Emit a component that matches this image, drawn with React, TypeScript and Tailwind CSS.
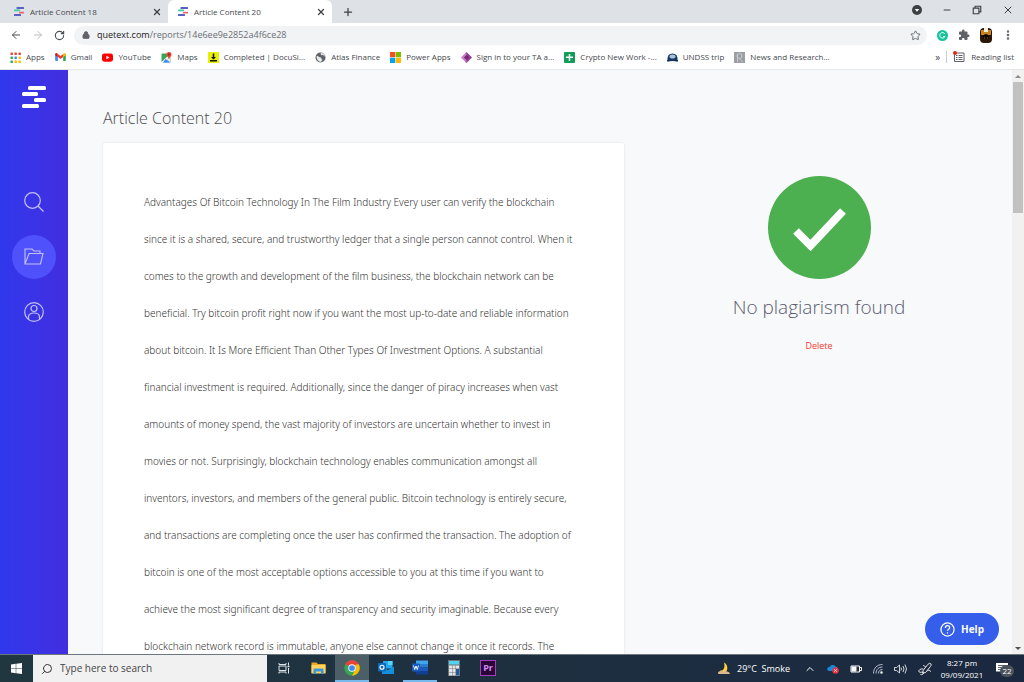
import { useState, type ReactNode } from "react";
import { clsx } from "clsx";
import { ArrowLeft, ArrowRight, RotateCw, Lock, Star, Plus, X, Minus, EllipsisVertical, Search, ChevronUp } from "lucide-react";
import { MdExtension } from "react-icons/md";

const TABS = [
  { id: 18, title: "Article Content 18" },
  { id: 20, title: "Article Content 20" },
];

const ARTICLE = [
  "Advantages Of Bitcoin Technology In The Film Industry Every user can verify the blockchain",
  "since it is a shared, secure, and trustworthy ledger that a single person cannot control. When it",
  "comes to the growth and development of the film business, the blockchain network can be",
  "beneficial. Try bitcoin profit right now if you want the most up-to-date and reliable information",
  "about bitcoin. It Is More Efficient Than Other Types Of Investment Options. A substantial",
  "financial investment is required. Additionally, since the danger of piracy increases when vast",
  "amounts of money spend, the vast majority of investors are uncertain whether to invest in",
  "movies or not. Surprisingly, blockchain technology enables communication amongst all",
  "inventors, investors, and members of the general public. Bitcoin technology is entirely secure,",
  "and transactions are completing once the user has confirmed the transaction. The adoption of",
  "bitcoin is one of the most acceptable options accessible to you at this time if you want to",
  "achieve the most significant degree of transparency and security imaginable. Because every",
  "blockchain network record is immutable, anyone else cannot change it once it records. The",
];

const Favicon = () => (
  <svg viewBox="0 0 20 18" className="h-[9px] w-[10px] shrink-0">
    <rect x="5" y="0" width="15" height="4" rx="1" fill="#5a5fc4" />
    <rect x="0" y="5" width="12" height="3.5" rx="1" fill="#3ecfa0" />
    <rect x="10" y="9.5" width="10" height="3.5" rx="1" fill="#f4606c" />
    <rect x="0" y="14" width="14" height="4" rx="1" fill="#5a5fc4" />
  </svg>
);

const AppsIcon = () => (
  <svg viewBox="0 0 11 11" className="size-[11px]">
    {["#ea4335", "#ea4335", "#ea4335", "#34a853", "#4285f4", "#fbbc05", "#34a853", "#fbbc05", "#fbbc05"].map((c, i) => (
      <rect key={i} x={0.5 + (i % 3) * 4} y={0.5 + Math.floor(i / 3) * 4} width="2.4" height="2.4" rx="0.5" fill={c} />
    ))}
  </svg>
);

const GmailIcon = () => (
  <svg viewBox="0 0 24 18" className="h-[8px] w-[11px]">
    <path d="M0 2v14q0 2 2 2h4V8z" fill="#4285f4" />
    <path d="M24 2v14q0 2-2 2h-4V8z" fill="#34a853" />
    <path d="M18 2v7l6-4V2q-2-4-6 0z" fill="#fbbc04" />
    <path d="M6 2v7l6 4.500 6-4.500V2l-6 4.500z" fill="#ea4335" />
    <path d="M0 2v3l6 4V2Q2-2 0 2z" fill="#c5221f" />
  </svg>
);

const YouTubeIcon = () => (
  <svg viewBox="0 0 24 18" className="h-[9px] w-[11px]">
    <rect width="24" height="18" rx="5" fill="#f00" />
    <path d="M9.500 5v8l7-4z" fill="#fff" />
  </svg>
);

const MapsIcon = () => (
  <svg viewBox="0 0 22 22" className="size-[11px]">
    <rect x="1" y="3" width="18" height="18" rx="2" fill="#34a853" />
    <path d="M3 21 19 7v12q0 2-2 2z" fill="#e8eaed" />
    <path d="M2 21 19 5" stroke="#fff" strokeWidth="3" />
    <path d="m9 14 10 7H4z" fill="#4285f4" />
    <path d="M16 0a5 5 0 0 1 5 5c0 4-4 5-5 10-1-5-5-6-5-10a5 5 0 0 1 5-5z" fill="#ea4335" />
    <circle cx="16" cy="5" r="1.800" fill="#8c1d18" />
  </svg>
);

const DocuIcon = () => (
  <svg viewBox="0 0 22 22" className="size-[11px]">
    <rect width="22" height="22" fill="#e8f000" />
    <path d="M9.500 3h3v7H16l-5 5-5-5h3.500zM4 16h14v3H4z" fill="#111" />
  </svg>
);

const AtlasIcon = () => (
  <svg viewBox="0 0 22 22" className="size-[11px]">
    <circle cx="11" cy="11" r="10" fill="#5f6368" />
    <path d="M3 8c4-1 5 3 8 3s1 4 3 4-1 4-3 5C6 19 3 14 3 8zM12 2c-2 3 1 5 3 4s3 2 5 3c-1-4-4-7-8-7z" fill="#e8eaed" />
  </svg>
);

const MicrosoftIcon = () => (
  <svg viewBox="0 0 22 22" className="size-[11px]">
    <path d="M0 0h10.500v10.500H0z" fill="#f25022" />
    <path d="M11.500 0H22v10.500H11.500z" fill="#7fba00" />
    <path d="M0 11.500h10.500V22H0z" fill="#00a4ef" />
    <path d="M11.500 11.500H22V22H11.500z" fill="#ffb900" />
  </svg>
);

const PowerIcon = () => (
  <svg viewBox="0 0 22 22" className="size-[11px]">
    <path d="M8 3 11 0l11 11-11 11-3-3z" fill="#8e3f90" />
    <path d="M11 0 0 11l11 11z" fill="#c77bc8" />
    <path d="m11 6 5 5-5 5-5-5z" fill="#742774" />
  </svg>
);

const SheetIcon = () => (
  <svg viewBox="0 0 22 22" className="size-[11px]">
    <rect width="22" height="22" rx="2" fill="#0f9d58" />
    <path d="M9.500 4h3v5H18v3h-5.500v6h-3v-6H4V9h5.500z" fill="#fff" />
  </svg>
);

const TripIcon = () => (
  <svg viewBox="0 0 22 18" className="h-[9px] w-[11px]">
    <path d="M3 4q8-6 16 0l2 6v6H1v-6z" fill="#17375e" />
    <ellipse cx="11" cy="7" rx="6" ry="4" fill="#a9c3df" />
    <path d="M0 14q11 6 22 0v3H0z" fill="#0b2545" />
  </svg>
);

const NewsIcon = () => (
  <svg viewBox="0 0 22 22" className="size-[11px]">
    <rect width="22" height="22" fill="#9b9fa3" />
    <circle cx="11" cy="8" r="5" fill="none" stroke="#d5d8da" strokeWidth="1.500" />
    <path d="M7 20V5M11 13l6 7" stroke="#d5d8da" strokeWidth="1.500" />
  </svg>
);

const BOOKMARKS: { label: string; icon: ReactNode }[] = [
  { label: "Apps", icon: <AppsIcon /> },
  { label: "Gmail", icon: <GmailIcon /> },
  { label: "YouTube", icon: <YouTubeIcon /> },
  { label: "Maps", icon: <MapsIcon /> },
  { label: "Completed | DocuSi...", icon: <DocuIcon /> },
  { label: "Atlas Finance", icon: <AtlasIcon /> },
  { label: "Power Apps", icon: <MicrosoftIcon /> },
  { label: "Sign in to your TA a...", icon: <PowerIcon /> },
  { label: "Crypto New Work -...", icon: <SheetIcon /> },
  { label: "UNDSS trip", icon: <TripIcon /> },
  { label: "News and Research...", icon: <NewsIcon /> },
];

function TabStrip() {
  const [active, setActive] = useState(20);

  return (
    <div className="flex h-[23px] items-stretch bg-[#dee1e6] pl-1">
      {TABS.map(({ id, title }) => (
        <div
          key={id}
          className={clsx("flex w-[164px] items-center rounded-t-md pr-1.5 pl-2.5", active === id && "bg-white")}
        >
          <button onClick={() => setActive(id)} className="flex flex-1 items-center gap-1.5 text-[8px] text-[#45494d]">
            <Favicon />
            {title}
          </button>
          <button aria-label={`Close ${title}`}>
            <X className="size-2.5 text-[#3c4043]" strokeWidth={3} />
          </button>
        </div>
      ))}
      <button aria-label="New tab" className="ml-2.5">
        <Plus className="size-3 text-[#3c4043]" strokeWidth={2.5} />
      </button>
      <div className="ml-auto flex items-center gap-5 pr-2.5 pb-1">
        <button aria-label="Search tabs">
          <svg viewBox="0 0 20 20" className="size-2.5">
            <circle cx="10" cy="10" r="10" fill="#3c4043" />
            <path d="M5.500 8h9L10 13.500z" fill="#fff" />
          </svg>
        </button>
        <button aria-label="Minimize">
          <Minus className="size-2.5 text-[#3c4043]" strokeWidth={2.5} />
        </button>
        <button aria-label="Restore">
          <svg viewBox="0 0 16 16" className="size-2.5" fill="none" stroke="#3c4043" strokeWidth="1.800">
            <path d="M2 5h9v9H2zM5 5V2h9v9h-3" />
          </svg>
        </button>
        <button aria-label="Close window">
          <X className="size-3 text-[#3c4043]" strokeWidth={2} />
        </button>
      </div>
    </div>
  );
}

function Toolbar() {
  return (
    <div className="flex h-6 items-center bg-white pr-2.5 pl-2.5">
      <div className="flex w-16 items-center gap-2.5">
        <button aria-label="Back"><ArrowLeft className="size-3 text-[#4a4e52]" strokeWidth={2} /></button>
        <button aria-label="Forward"><ArrowRight className="size-3 text-[#babcbe]" strokeWidth={2} /></button>
        <button aria-label="Reload"><RotateCw className="size-[11px] text-[#4a4e52]" strokeWidth={2.5} /></button>
      </div>
      <div className="flex h-[19px] flex-1 items-center rounded-full bg-[#f1f3f4] pr-1.5 pl-2">
        <Lock className="size-2 text-[#5f6368]" fill="#5f6368" strokeWidth={3} />
        <a href="#" className="ml-[7px] text-[9px] text-[#6b6f74]">
          <span className="text-[#202124]">quetext.com</span>/reports/14e6ee9e2852a4f6ce28
        </a>
        <button aria-label="Bookmark" className="ml-auto">
          <Star className="size-[11px] text-[#5f6368]" strokeWidth={2} />
        </button>
      </div>
      <div className="ml-2.5 flex items-center gap-2.5">
        <button aria-label="Grammarly">
          <svg viewBox="0 0 22 22" className="size-[11px]">
            <circle cx="11" cy="11" r="11" fill="#15c39a" />
            <path d="M15.500 7.500A5.500 5.500 0 1 0 16 13h-4" fill="none" stroke="#fff" strokeWidth="2" />
          </svg>
        </button>
        <button aria-label="Extensions"><MdExtension className="size-3 text-[#5f6368]" /></button>
        <button aria-label="Profile">
          <svg viewBox="0 0 12 15" className="h-[15px] w-3">
            <rect width="12" height="15" rx="4" fill="#2a1705" />
            <path d="M1 2h10v5H1z" fill="#c98422" />
            <path d="M4 0h4v4H4z" fill="#f3ece2" />
            <path d="M3 8q3-4 6 0v3H3z" fill="#0d0803" />
            <path d="M4 10h1M7 10h1" stroke="#b8791f" />
          </svg>
        </button>
        <button aria-label="Menu"><EllipsisVertical className="size-3 text-[#5f6368]" strokeWidth={3} /></button>
      </div>
    </div>
  );
}

function BookmarksBar() {
  return (
    <nav className="flex h-[23px] items-center border-b border-[#e4e6e8] bg-white px-2.5 pb-0.5 text-[8px] text-[#45494d]">
      <div className="flex min-w-0 items-center gap-2.5 whitespace-nowrap">
        {BOOKMARKS.map(({ label, icon }) => (
          <a key={label} href="#" className="flex shrink-0 items-center gap-[5px]">
            {icon}
            {label}
          </a>
        ))}
      </div>
      <button aria-label="More bookmarks" className="ml-auto text-[10px]">»</button>
      <button className="ml-1.5 flex items-center gap-1.5 border-l border-[#c9ccd0] pl-1.5 whitespace-nowrap">
        <svg viewBox="0 0 24 24" className="size-3">
          <path d="M3 4h19v17H3z" fill="none" stroke="#5f6368" strokeWidth="2" />
          <path d="M6 9h3M11 9h8M6 13h3M11 13h8M6 17h3M11 17h8" stroke="#5f6368" strokeWidth="2" />
          <circle cx="4" cy="4" r="4" fill="#e0281c" />
        </svg>
        Reading list
      </button>
    </nav>
  );
}

function Sidebar() {
  return (
    <aside className="flex w-[68px] shrink-0 flex-col items-center bg-linear-to-r from-[#3038ec] to-[#422ee0] pt-4">
      <a href="#" aria-label="Quetext">
        <svg viewBox="0 0 24 22" className="h-[22px] w-6" fill="#fff">
          <rect x="6" y="0" width="18" height="4" rx="1.500" />
          <rect x="0" y="6" width="16" height="4" rx="1.500" />
          <rect x="12" y="12" width="12" height="4" rx="1.500" />
          <rect x="0" y="18" width="17" height="4" rx="1.500" />
        </svg>
      </a>
      <nav className="mt-[72px] flex flex-col items-center gap-[11px]">
        <a href="#" aria-label="Search" className="flex size-11 items-center justify-center">
          <svg viewBox="0 0 20 20" className="size-5" fill="none" stroke="#c3c1fa" strokeWidth="1.200">
            <circle cx="8.500" cy="8.500" r="7.800" />
            <path d="m14 14 5.500 5.500" />
          </svg>
        </a>
        <a href="#" aria-label="Reports" className="flex size-11 items-center justify-center rounded-full bg-[#4f51fc]">
          <svg viewBox="0 0 20 20" className="size-5" fill="none" stroke="#c3c1fa" strokeWidth="1.100">
            <path d="M1 17V2h7l2 2h6v2.500M1 17h15.500L19 6.500H5z" />
          </svg>
        </a>
        <a href="#" aria-label="Account" className="flex size-11 items-center justify-center">
          <svg viewBox="0 0 20 20" className="size-5" fill="none" stroke="#c3c1fa" strokeWidth="1.200">
            <circle cx="10" cy="10" r="9.300" />
            <circle cx="10" cy="6.500" r="3" />
            <path d="M4.500 17.300v-2.300q0-4 5.500-4t5.500 4v2.300" />
          </svg>
        </a>
      </nav>
    </aside>
  );
}

function Report() {
  return (
    <main className="relative grid min-w-0 flex-1 grid-cols-[521fr_386fr] gap-0.5 overflow-hidden bg-[#f8f9fb] pl-[35px]">
      <section className="min-w-0">
        <h1 className="mt-9 text-[16px] leading-6 font-light text-[#4c4c4c]">Article Content 20</h1>
        <article className="mt-[13px] rounded-xs bg-white px-[41px] py-[41px] font-['Noto_Sans','Open_Sans',sans-serif] text-[10px] leading-[37px] font-light text-[#333] shadow-[0_0_3px_rgba(0,0,0,0.1)]">
          <p>
            {ARTICLE.map((line) => (
              <span key={line} className="block whitespace-nowrap">{line}</span>
            ))}
          </p>
        </article>
      </section>
      <section className="flex flex-col items-center pt-[106px]">
        <svg viewBox="0 0 103 103" className="size-[103px]">
          <circle cx="51.500" cy="51.500" r="51.500" fill="#4caf50" />
          <path d="m28 55 14.500 14.500L75 35" fill="none" stroke="#fff" strokeWidth="8" />
        </svg>
        <h2 className="mt-[13px] text-[19px] leading-[30px] font-light text-[#5a5a6e]">No plagiarism found</h2>
        <button className="mt-4 text-[9px] leading-4 text-[#f03a2e]">Delete</button>
      </section>
      <button className="absolute right-[13px] bottom-[9px] flex h-8 w-[74px] items-center justify-center gap-1.5 rounded-full bg-[#355eea] text-[10px] font-bold text-white">
        <svg viewBox="0 0 24 24" className="size-[15px]" fill="none" stroke="#fff" strokeWidth="2">
          <circle cx="12" cy="12" r="10.500" />
          <path d="M8.500 9.500c0-5 7-4.500 7-.5 0 2.500-3.500 2.500-3.500 5" />
          <path d="M12 16.500v2" />
        </svg>
        Help
      </button>
    </main>
  );
}

function Scrollbar() {
  return (
    <div aria-hidden="true" className="flex w-3 shrink-0 flex-col items-center bg-[#f1f1f1]">
      <svg viewBox="0 0 12 12" className="size-3"><path d="M3 8h6L6 5z" fill="#8a8a8a" /></svg>
      <div className="h-[131px] w-2.5 bg-[#c1c1c1]" />
      <svg viewBox="0 0 12 12" className="mt-auto size-3"><path d="M3 5h6L6 8z" fill="#505050" /></svg>
    </div>
  );
}

const TASKS: { name: string; running?: boolean; open?: boolean; icon: ReactNode }[] = [
  {
    name: "Task View",
    icon: (
      <svg viewBox="0 0 24 24" className="size-3" fill="none" stroke="#dfe4e6" strokeWidth="2">
        <path d="M2 8h14v9H2zM2 2v3h14V2M2 23v-3h14v3M21 1v6M21 12v11" />
        <path d="M19 9h4" strokeWidth="3" />
      </svg>
    ),
  },
  {
    name: "File Explorer",
    icon: (
      <svg viewBox="0 0 30 24" className="h-3 w-[15px]">
        <path d="M1 1h10l3 3h15v18H1z" fill="#e9a821" />
        <path d="M1 6h28v17H1z" fill="#ffd35c" />
        <path d="M5 24v-9q0-2 2-2h16q2 0 2 2v9h-5v-5H10v5z" fill="#3c97dc" />
      </svg>
    ),
  },
  {
    name: "Chrome",
    running: true,
    open: true,
    icon: (
      <svg viewBox="0 0 24 24" className="size-4">
        <circle cx="12" cy="12" r="11.500" fill="#34a853" />
        <path d="M12 12 2 6.200A11.500 11.500 0 0 1 22 6.200z" fill="#ea4335" />
        <path d="M22 6.200A11.500 11.500 0 0 1 12 23.500L17 14V6.200z" fill="#fbbc05" />
        <path d="M7 6.200h15l-5 1-5 4z" fill="#ea4335" />
        <circle cx="12" cy="12" r="5.600" fill="#fff" />
        <circle cx="12" cy="12" r="4.300" fill="#4285f4" />
      </svg>
    ),
  },
  {
    name: "Outlook",
    icon: (
      <svg viewBox="0 0 32 30" className="h-[15px] w-4">
        <path d="M10 2h19v15H10z" fill="#28a8ea" />
        <path d="M20 2h9v8h-9z" fill="#50d9ff" />
        <path d="M8 13l12 7 12-7v15H8z" fill="#1490df" />
        <rect x="0" y="6" width="16" height="17" rx="2" fill="#0f6cbd" />
        <circle cx="8" cy="14.500" r="4" fill="none" stroke="#fff" strokeWidth="2.200" />
      </svg>
    ),
  },
  {
    name: "Word",
    open: true,
    icon: (
      <svg viewBox="0 0 32 30" className="h-[15px] w-4">
        <path d="M8 1h24v7H8z" fill="#41a5ee" />
        <path d="M8 8h24v7H8z" fill="#2b7cd3" />
        <path d="M8 15h24v7H8z" fill="#185abd" />
        <path d="M8 22h24v7H8z" fill="#103f91" />
        <rect x="0" y="7" width="16" height="16" rx="2" fill="#185abd" />
        <path d="m3 11 2.500 8L8 12l2.500 7L13 11" fill="none" stroke="#fff" strokeWidth="1.800" />
      </svg>
    ),
  },
  {
    name: "Calculator",
    icon: (
      <svg viewBox="0 0 24 32" className="h-4 w-3">
        <rect width="24" height="32" fill="#6d7276" />
        <path d="M2 2h20v7H2z" fill="#50d4f4" />
        {[0, 1, 2, 3, 4, 5, 6, 7, 8].map((i) => (
          <rect key={i} x={2 + (i % 3) * 7} y={11 + Math.floor(i / 3) * 7} width="6" height="6" fill="#e3e6e8" />
        ))}
        <rect x="16" y="18" width="6" height="13" fill="#1d5c9e" />
      </svg>
    ),
  },
  {
    name: "Premiere Pro",
    icon: (
      <span className="flex size-4 items-center justify-center border border-[#a13fc4] bg-[#2a0634] text-[9px] leading-none font-bold text-[#d98cf5]">
        Pr
      </span>
    ),
  },
];

function Taskbar() {
  return (
    <footer className="flex h-7 shrink-0 items-stretch border-t border-[#6c777d] bg-linear-to-r from-[#213740] to-[#1b2840] text-[9px] text-white">
      <button aria-label="Start" className="flex w-[33px] items-center justify-center">
        <svg viewBox="0 0 22 22" className="size-[11px]" fill="#fff">
          <path d="M0 3 9.500 1.700v8.800H0zM10.500 1.500 22 0v10.500H10.500zM0 11.500h9.500v8.800L0 19zM10.500 11.500H22V22l-11.500-1.500z" />
        </svg>
      </button>
      <label className="flex w-[234px] items-center gap-[7px] bg-[#f1f1f1] pl-2 text-[#333]">
        <Search className="size-3 shrink-0 -scale-x-100" strokeWidth={2} />
        <input
          aria-label="Search"
          placeholder="Type here to search"
          className="w-full bg-transparent text-[10px] outline-none placeholder:text-[#444]"
        />
      </label>
      <div className="flex">
        {TASKS.map(({ name, icon, running, open }) => (
          <button
            key={name}
            aria-label={name}
            className={clsx(
              "flex w-[34px] items-center justify-center border-b-2",
              running && "bg-[#4d5f66]",
              open ? "border-[#76b9ed]" : "border-transparent"
            )}
          >
            {icon}
          </button>
        ))}
      </div>
      <div className="ml-auto flex items-center whitespace-nowrap">
        <button className="flex items-center gap-1.5">
          <svg viewBox="0 0 28 26" className="h-[13px] w-3.5">
            <path d="M14 1c7 3 10 15 2 20-5 2-10 0-11-3 8 0 12-7 9-17z" fill="#ffd23e" />
            <path d="M3 24q-3-4 2-5 4-4 8 0 3-3 6 0 6-1 7 5z" fill="#d9b88b" />
          </svg>
          29°C&nbsp; Smoke
        </button>
        <div className="ml-3.5 flex items-center gap-[11px]">
          <button aria-label="Show hidden icons"><ChevronUp className="size-3" strokeWidth={2} /></button>
          <svg viewBox="0 0 24 20" className="h-[10px] w-3">
            <path d="M4 14a4 4 0 0 1 1-8 7 7 0 0 1 12-1 5 5 0 0 1 3 9z" fill="#1489dd" />
            <circle cx="17" cy="13" r="6.500" fill="#e23442" />
            <path d="m14.500 10.500 5 5m0-5-5 5" stroke="#fff" strokeWidth="1.500" />
          </svg>
          <svg viewBox="0 0 24 16" className="h-2 w-3" fill="none" stroke="#fff" strokeWidth="2">
            <path d="M2 2h17v12H2zM20 5h3v6h-3" />
            <path d="M4 4h8v8H4z" fill="#fff" />
          </svg>
          <svg viewBox="0 0 20 20" className="size-2.5" fill="none" stroke="#c9d0d6" strokeWidth="1.800">
            <path d="M1 19C1 8 8 1 19 1M6 19C6 11 11 6 19 6M11 19c0-5 3-8 8-8" />
            <circle cx="17" cy="17" r="2" fill="#fff" />
          </svg>
          <svg viewBox="0 0 26 20" className="h-[10px] w-[13px]" fill="none" stroke="#fff" strokeWidth="1.600">
            <path d="M1 7h4l6-5v16l-6-5H1zM14 7q2 3 0 6M18 4q4 6 0 12M22 1q6 9 0 18" />
          </svg>
          <svg viewBox="0 0 24 24" className="size-3.5" fill="none" stroke="#fff" strokeWidth="1.500">
            <path d="m9 14 8-10q3-3 5-1t-1 5l-8 10-5 1z" />
            <path d="M9 12c-6-1-9 3-7 5s5-1 7 1-3 5-5 3M16 15c4-2 6 0 5 2M13 8 9 6" />
          </svg>
        </div>
        <div className="ml-1.5 w-12 text-center text-[8px] leading-3">
          <div>8:27 pm</div>
          <div>09/09/2021</div>
        </div>
        <button aria-label="Notifications" className="relative mr-3 ml-2.5 size-4">
          <svg viewBox="0 0 24 22" className="h-[11px] w-3">
            <path d="M0 0h24v17h-6v5l-5-5H0z" fill="#fff" />
            <path d="M4 5h16M4 9h16M4 13h10" stroke="#25323f" strokeWidth="1.500" />
          </svg>
          <span className="absolute top-1 left-1 flex h-3 w-3.5 items-center justify-center rounded-full bg-[#4b535b] text-[8px] leading-none">
            22
          </span>
        </button>
      </div>
    </footer>
  );
}

export default function App() {
  return (
    <div className="flex h-screen flex-col overflow-hidden font-['Open_Sans','Noto_Sans',sans-serif]">
      <header className="shrink-0">
        <TabStrip />
        <Toolbar />
        <BookmarksBar />
      </header>
      <div className="flex min-h-0 flex-1">
        <Sidebar />
        <Report />
        <Scrollbar />
      </div>
      <Taskbar />
    </div>
  );
}
